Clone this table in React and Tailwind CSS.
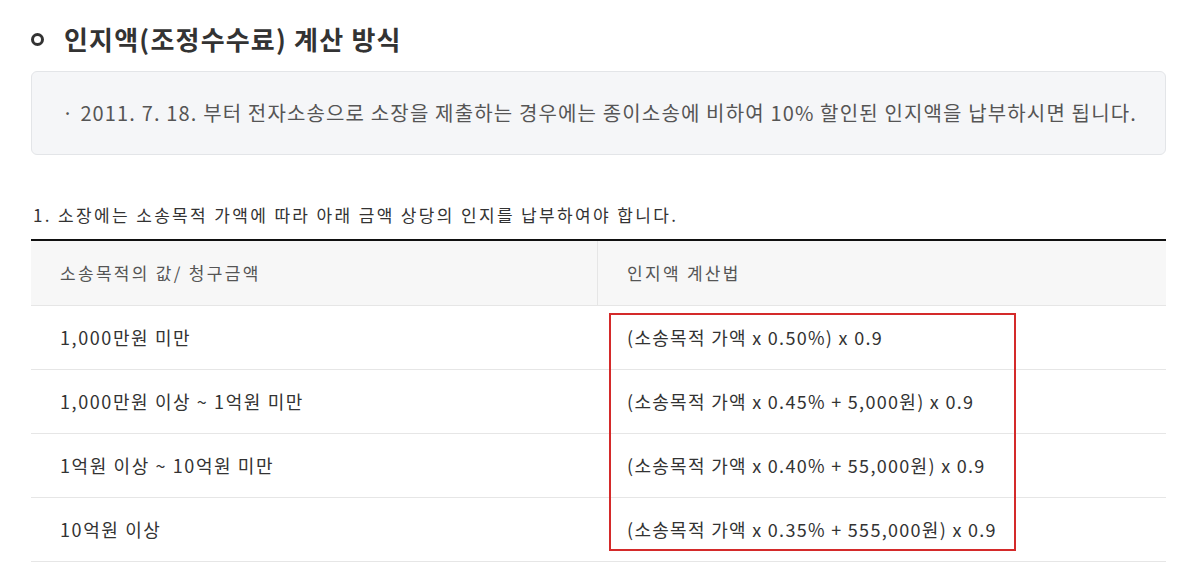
import React from "react";

const rows = [
  { range: "1,000만원 미만", formula: "(소송목적 가액 x 0.50%) x 0.9" },
  { range: "1,000만원 이상 ~ 1억원 미만", formula: "(소송목적 가액 x 0.45% + 5,000원) x 0.9" },
  { range: "1억원 이상 ~ 10억원 미만", formula: "(소송목적 가액 x 0.40% + 55,000원) x 0.9" },
  { range: "10억원 이상", formula: "(소송목적 가액 x 0.35% + 555,000원) x 0.9" },
];

const StampFee = () => {
  return (
    <div
      className="min-h-screen bg-white pl-[31px] pt-[22px]"
      style={{ fontFamily: '"Noto Sans CJK KR", "Noto Sans", sans-serif' }}
    >
      <div className="w-[1135px]">
        {/* Title */}
        <div className="flex items-center h-[34px]">
          <span className="w-[13px] h-[13px] rounded-full border-[3px] border-[#333]" />
          <h2 className="ml-[20px] text-[26px] font-bold text-[#333] leading-[34px] tracking-[1.2px]">
            인지액(조정수수료) 계산 방식
          </h2>
        </div>

        {/* Notice box */}
        <div className="mt-[15px] h-[84px] flex items-center rounded-[6px] border border-[#e3e5e8] bg-[#f5f6f8] pl-[30px]">
          <p className="text-[20px] text-[#555] leading-none tracking-[1.15px]">
            <span className="mr-[6px]">·</span>
            2011. 7. 18. 부터 전자소송으로 소장을 제출하는 경우에는 종이소송에 비하여 10% 할인된 인지액을 납부하시면 됩니다.
          </p>
        </div>

        {/* Caption */}
        <p className="mt-[48px] pl-[2px] text-[17px] text-[#333] leading-[24px] tracking-[2.35px]">
          1. 소장에는 소송목적 가액에 따라 아래 금액 상당의 인지를 납부하여야 합니다.
        </p>

        {/* Table */}
        <div className="relative mt-[12px] border-t-2 border-[#111]">
          <div className="grid grid-cols-[567px_1fr] h-[65px] bg-[#f7f7f7] border-b border-[#e6e6e6] text-[17px] text-[#555] tracking-[2.3px]">
            <div className="flex items-center pl-[29px] border-r border-[#e6e6e6]">소송목적의 값/ 청구금액</div>
            <div className="flex items-center pl-[29px]">인지액 계산법</div>
          </div>
          {rows.map((row, index) => (
            <div
              key={index}
              className="grid grid-cols-[567px_1fr] h-[64px] border-b border-[#e6e6e6] text-[18px] text-[#333]"
            >
              <div className="flex items-center pl-[29px] tracking-[1.6px]">{row.range}</div>
              <div className="flex items-center pl-[29px] tracking-[1.3px]">{row.formula}</div>
            </div>
          ))}

          {/* Highlight box */}
          <div className="absolute left-[578px] top-[72px] w-[407px] h-[238px] border-2 border-[#d42a2a] pointer-events-none" />
        </div>
      </div>
    </div>
  );
};

export default StampFee;
